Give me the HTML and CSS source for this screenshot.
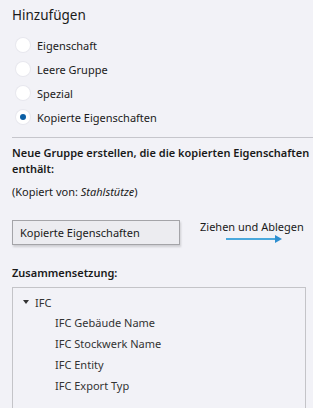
FILE: index.html
```html
<!DOCTYPE html>
<html lang="de">
<head>
    <meta charset="UTF-8">
    <meta name="viewport" content="width=device-width, initial-scale=1.0">
    <title>Hinzufügen</title>
    <link rel="stylesheet" href="styles.css">
</head>
<body>

<div class="panel">
    <h1 class="title">Hinzufügen</h1>

    <!-- Auswahl -->
    <div class="options">
        <label class="option"><span class="radio"></span>Eigenschaft</label>
        <label class="option"><span class="radio"></span>Leere Gruppe</label>
        <label class="option"><span class="radio"></span>Spezial</label>
        <label class="option"><span class="radio checked"></span>Kopierte Eigenschaften</label>
    </div>

    <div class="separator"></div>

    <p class="heading">Neue Gruppe erstellen, die die kopierten Eigenschaften enthält:</p>
    <p class="source">(Kopiert von: <em>Stahlstütze</em>)</p>

    <div class="drag-row">
        <div class="drag-item">Kopierte Eigenschaften</div>
        <div class="drag-hint">
            <span>Ziehen und Ablegen</span>
            <svg class="arrow" width="56" height="8" viewBox="0 0 56 8">
                <line x1="0" y1="4" x2="50" y2="4" stroke="#4aa8dc" stroke-width="2"/>
                <polygon points="49,0 56,4 49,8" fill="#2e8fd0"/>
            </svg>
        </div>
    </div>

    <p class="heading">Zusammensetzung:</p>

    <!-- Baum -->
    <div class="tree">
        <div class="tree-node"><span class="caret"></span>IFC</div>
        <div class="tree-leaf">IFC Gebäude Name</div>
        <div class="tree-leaf">IFC Stockwerk Name</div>
        <div class="tree-leaf">IFC Entity</div>
        <div class="tree-leaf">IFC Export Typ</div>
    </div>
</div>

</body>
</html>
```

FILE: styles.css
```css
body {
    font-family: "Noto Sans", "Open Sans", sans-serif;
    font-size: 11px;
    color: #1a1a1a;
    background-color: #f2f2f7;
    margin: 0;
    padding: 0;
    overflow: hidden;
}
.panel {
    padding: 5px 0 0 12px;
}
.title {
    font-size: 13.5px;
    font-weight: normal;
    margin: 0 0 11px 0;
    line-height: 20px;
}
.options {
    display: flex;
    flex-direction: column;
    gap: 6px;
    padding-left: 4px;
}
.option {
    display: flex;
    align-items: center;
    gap: 7px;
    height: 18px;
}
.radio {
    width: 14px;
    height: 14px;
    border-radius: 50%;
    background-color: #fff;
    box-shadow: 0 0 0 1px #e8e8ee;
    display: flex;
    align-items: center;
    justify-content: center;
}
.radio.checked::after {
    content: "";
    width: 6px;
    height: 6px;
    border-radius: 50%;
    background-color: #0b5fa5;
}
.separator {
    height: 1px;
    background-color: #c6c6cc;
    margin: 11px 0 7px 0;
}
.heading {
    font-weight: 600;
    margin: 0;
    line-height: 16px;
}
.source {
    margin: 7px 0 0 0;
    line-height: 16px;
}
.drag-row {
    display: flex;
    align-items: flex-start;
    margin: 20px 0 20px 0;
}
.drag-item {
    width: 159px;
    height: 23px;
    line-height: 23px;
    padding-left: 7px;
    border: 1px solid #a4a4a8;
    background-color: #ececf0;
    box-shadow: 1px 2px 2px rgba(0, 0, 0, 0.15);
}
.drag-hint {
    display: flex;
    flex-direction: column;
    margin: -1px 0 0 20px;
    line-height: 16px;
    white-space: nowrap;
}
.arrow {
    margin: 0 0 0 26px;
}
.tree {
    margin: 6px 7px 0 0;
    height: 130px;
    border: 1px solid #c4c4c8;
    border-bottom: none;
    padding-top: 4px;
    color: #333;
}
.tree-node {
    display: flex;
    align-items: center;
    height: 20px;
    padding-left: 10px;
}
.caret {
    width: 0;
    height: 0;
    border-left: 3px solid transparent;
    border-right: 3px solid transparent;
    border-top: 4px solid #333;
    margin-right: 6px;
}
.tree-leaf {
    height: 21px;
    line-height: 21px;
    padding-left: 42px;
}
```
